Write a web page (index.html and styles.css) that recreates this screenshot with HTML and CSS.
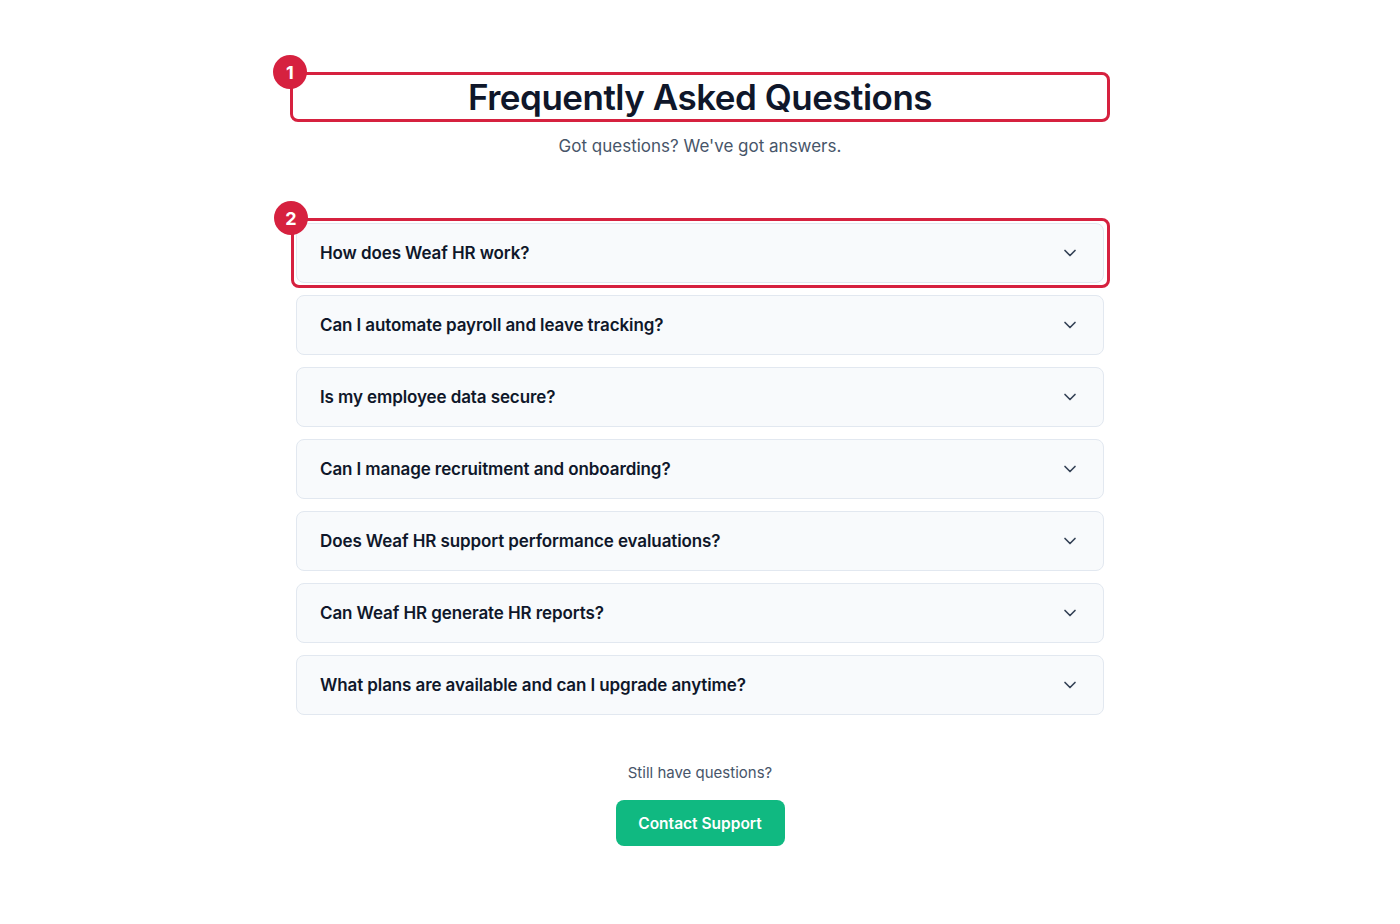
FILE: index.html
```html
<!DOCTYPE html>
<html lang="en">
<head>
<meta charset="utf-8">
<title>FAQ — Weaf HR</title>
<link rel="stylesheet" href="styles.css">
</head>
<body>
<section class="faq">
  <header class="faq-head">
    <div class="marked">
      <h1 class="faq-title">Frequently Asked Questions</h1>
      <span class="mark-frame mark-frame--title"></span>
      <span class="mark-badge">1</span>
    </div>
    <p class="faq-sub">Got questions? We've got answers.</p>
  </header>

  <div class="faq-list">
    <div class="marked">
      <button class="faq-item" type="button">
        <span class="faq-q">How does Weaf HR work?</span>
        <svg class="chev" viewBox="0 0 24 24" width="20" height="20"><path d="m6 9 6 6 6-6"/></svg>
      </button>
      <span class="mark-frame mark-frame--item"></span>
      <span class="mark-badge mark-badge--item">2</span>
    </div>
    <button class="faq-item" type="button">
      <span class="faq-q">Can I automate payroll and leave tracking?</span>
      <svg class="chev" viewBox="0 0 24 24" width="20" height="20"><path d="m6 9 6 6 6-6"/></svg>
    </button>
    <button class="faq-item" type="button">
      <span class="faq-q">Is my employee data secure?</span>
      <svg class="chev" viewBox="0 0 24 24" width="20" height="20"><path d="m6 9 6 6 6-6"/></svg>
    </button>
    <button class="faq-item" type="button">
      <span class="faq-q">Can I manage recruitment and onboarding?</span>
      <svg class="chev" viewBox="0 0 24 24" width="20" height="20"><path d="m6 9 6 6 6-6"/></svg>
    </button>
    <button class="faq-item" type="button">
      <span class="faq-q">Does Weaf HR support performance evaluations?</span>
      <svg class="chev" viewBox="0 0 24 24" width="20" height="20"><path d="m6 9 6 6 6-6"/></svg>
    </button>
    <button class="faq-item" type="button">
      <span class="faq-q">Can Weaf HR generate HR reports?</span>
      <svg class="chev" viewBox="0 0 24 24" width="20" height="20"><path d="m6 9 6 6 6-6"/></svg>
    </button>
    <button class="faq-item" type="button">
      <span class="faq-q">What plans are available and can I upgrade anytime?</span>
      <svg class="chev" viewBox="0 0 24 24" width="20" height="20"><path d="m6 9 6 6 6-6"/></svg>
    </button>
  </div>

  <footer class="faq-foot">
    <p class="faq-more">Still have questions?</p>
    <a class="btn-support" href="#">Contact Support</a>
  </footer>
</section>
</body>
</html>
```

FILE: styles.css
```css
* { box-sizing: border-box; }

html, body {
  margin: 0;
  background: #ffffff;
  font-family: Inter, "Noto Sans", "Liberation Sans", sans-serif;
  color: #0f172a;
}

.faq {
  width: 808px;
  margin: 0 auto;
  padding-top: 75px;
  display: flex;
  flex-direction: column;
}

.faq-head {
  display: flex;
  flex-direction: column;
  align-items: stretch;
  text-align: center;
}

.faq-title {
  margin: 0;
  font-size: 35px;
  line-height: 44px;
  font-weight: 600;
  letter-spacing: -0.5px;
  color: #0f172a;
}

.faq-sub {
  margin: 14px 0 0;
  font-size: 17px;
  line-height: 26px;
  color: #475569;
}

.faq-list {
  margin-top: 64px;
  display: flex;
  flex-direction: column;
  gap: 12px;
}

.faq-item {
  width: 100%;
  height: 60px;
  padding: 0 24px 0 23px;
  display: flex;
  align-items: center;
  justify-content: space-between;
  background: #f8fafc;
  border: 1px solid #e2e8f0;
  border-radius: 8px;
  font-family: inherit;
  cursor: pointer;
  text-align: left;
}

.faq-q {
  font-size: 17px;
  font-weight: 600;
  color: #0f172a;
  letter-spacing: -0.1px;
}

.chev {
  flex: none;
  margin-right: -1px;
  fill: none;
  stroke: #334155;
  stroke-width: 2;
  stroke-linecap: round;
  stroke-linejoin: round;
}

.faq-foot {
  margin-top: 46px;
  display: flex;
  flex-direction: column;
  align-items: center;
}

.faq-more {
  margin: 0;
  font-size: 15px;
  line-height: 24px;
  color: #475569;
}

.btn-support {
  margin-top: 15px;
  width: 169px;
  height: 46px;
  display: flex;
  align-items: center;
  justify-content: center;
  background: #10b981;
  color: #ffffff;
  border-radius: 8px;
  font-size: 15.5px;
  font-weight: 600;
  text-decoration: none;
}

/* Numbered callout frames drawn over the heading and first item */
.marked {
  position: relative;
}

.mark-frame {
  position: absolute;
  border: 3px solid #d6213f;
  border-radius: 8px;
  pointer-events: none;
}

.mark-frame--title {
  top: -3px;
  bottom: -3px;
  left: -6px;
  right: -6px;
}

.mark-frame--item {
  top: -5px;
  bottom: -5px;
  left: -5px;
  right: -6px;
}

.mark-badge {
  position: absolute;
  top: -20px;
  left: -23px;
  width: 34px;
  height: 34px;
  border-radius: 50%;
  background: #d6213f;
  color: #ffffff;
  font-size: 18px;
  font-weight: 700;
  display: flex;
  align-items: center;
  justify-content: center;
}

.mark-badge--item {
  top: -22px;
  left: -22px;
}
```
